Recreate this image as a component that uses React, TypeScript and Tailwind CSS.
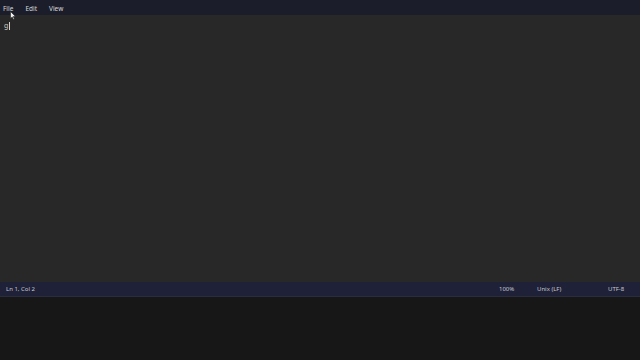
export default function App() {
  return (
    <div className="relative w-[640px] h-[360px] flex flex-col bg-[#161616] overflow-hidden" style={{ fontFamily: '"Segoe UI", "Noto Sans", "Liberation Sans", sans-serif' }}>
      <div className="h-[15px] flex items-center bg-[#1b1e2a] text-[6.5px] text-[#d8d8dc] pl-[3px] pt-[2px]">
        <span className="mr-[12px]">File</span>
        <span className="mr-[12px]">Edit</span>
        <span>View</span>
      </div>
      <div className="h-[267px] bg-[#282828] pl-[4px] pt-[6px] text-[7px] text-[#cfcfcf] leading-[10px]">
        <span>g</span><span className="inline-block w-[1px] h-[8px] bg-[#d0d0d0] align-middle ml-[0.5px]"></span>
      </div>
      <div className="h-[15px] flex items-center bg-[#1e2138] text-[6px] text-[#c8c8d0] border-b border-[#2a2d3e]">
        <span className="ml-[6px]">Ln 1, Col 2</span>
        <span className="ml-auto w-[38px]">100%</span>
        <span className="w-[71px]">Unix (LF)</span>
        <span className="w-[32px]">UTF-8</span>
      </div>
      <div className="flex-1 bg-[#171717]"></div>
      <svg className="absolute left-[10px] top-[11px]" width="6" height="9" viewBox="0 0 6 9">
        <path d="M0.5 0.5 L0.5 7.5 L2.2 6 L3.4 8.5 L4.4 8 L3.2 5.6 L5.5 5.5 Z" fill="#f0f0f0" stroke="#222" strokeWidth="0.6" />
      </svg>
    </div>
  );
}
